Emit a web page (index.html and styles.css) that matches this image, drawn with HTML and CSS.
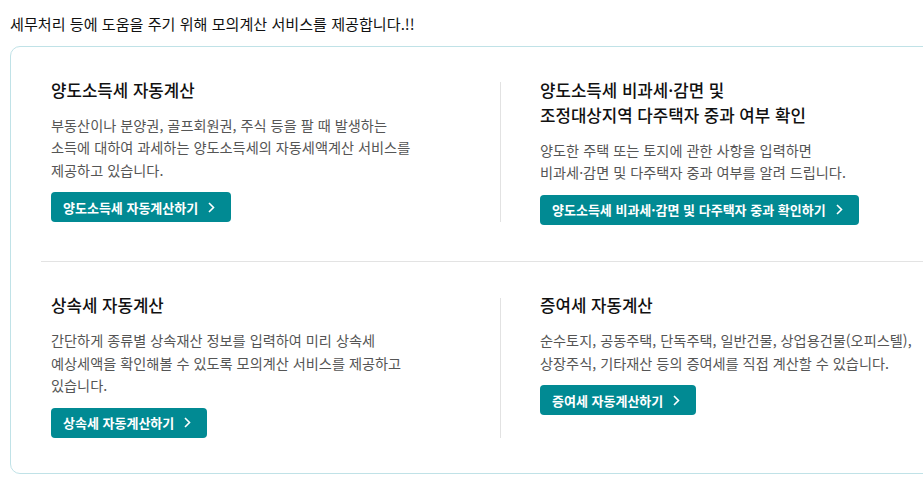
FILE: index.html
```html
<!DOCTYPE html>
<html lang="ko">
<head>
<meta charset="utf-8">
<title>모의계산 서비스</title>
<link rel="stylesheet" href="styles.css">
</head>
<body>
<p class="intro">세무처리 등에 도움을 주기 위해 모의계산 서비스를 제공합니다.!!</p>
<div class="card">
  <div class="row row-top">
    <div class="item item-left">
      <h3 class="item-title">양도소득세 자동계산</h3>
      <p class="item-desc">부동산이나 분양권, 골프회원권, 주식 등을 팔 때 발생하는<br>소득에 대하여 과세하는 양도소득세의 자동세액계산 서비스를<br>제공하고 있습니다.</p>
      <a class="btn" href="#">양도소득세 자동계산하기<svg class="chev" width="7" height="11" viewBox="0 0 7 11"><polyline points="1,1 5.5,5.5 1,10" fill="none" stroke="#fff" stroke-width="1.6"/></svg></a>
    </div>
    <div class="item item-right">
      <h3 class="item-title">양도소득세 비과세·감면 및<br>조정대상지역 다주택자 중과 여부 확인</h3>
      <p class="item-desc">양도한 주택 또는 토지에 관한 사항을 입력하면<br>비과세·감면 및 다주택자 중과 여부를 알려 드립니다.</p>
      <a class="btn" href="#">양도소득세 비과세·감면 및 다주택자 중과 확인하기<svg class="chev" width="7" height="11" viewBox="0 0 7 11"><polyline points="1,1 5.5,5.5 1,10" fill="none" stroke="#fff" stroke-width="1.6"/></svg></a>
    </div>
  </div>
  <div class="row row-bottom">
    <div class="item item-left">
      <h3 class="item-title">상속세 자동계산</h3>
      <p class="item-desc">간단하게 종류별 상속재산 정보를 입력하여 미리 상속세<br>예상세액을 확인해볼 수 있도록 모의계산 서비스를 제공하고<br>있습니다.</p>
      <a class="btn" href="#">상속세 자동계산하기<svg class="chev" width="7" height="11" viewBox="0 0 7 11"><polyline points="1,1 5.5,5.5 1,10" fill="none" stroke="#fff" stroke-width="1.6"/></svg></a>
    </div>
    <div class="item item-right">
      <h3 class="item-title">증여세 자동계산</h3>
      <p class="item-desc">순수토지, 공동주택, 단독주택, 일반건물, 상업용건물(오피스텔),<br>상장주식, 기타재산 등의 증여세를 직접 계산할 수 있습니다.</p>
      <a class="btn" href="#">증여세 자동계산하기<svg class="chev" width="7" height="11" viewBox="0 0 7 11"><polyline points="1,1 5.5,5.5 1,10" fill="none" stroke="#fff" stroke-width="1.6"/></svg></a>
    </div>
  </div>
</div>
</body>
</html>
```
FILE: styles.css
```css
html, body {
  margin: 0;
  overflow: hidden;
  background: #fff;
}
body {
  padding: 12px 0 0 10px;
  font-family: "Noto Sans CJK KR", "Noto Sans", sans-serif;
  color: #222;
}
.intro {
  margin: 0;
  font-size: 15.1px;
  line-height: 22px;
  color: #111;
  white-space: nowrap;
}
.card {
  margin-top: 12px;
  width: 960px;
  box-sizing: border-box;
  border: 1px solid #c0e2e7;
  border-radius: 10px;
  padding: 35px 0 35px 30px;
}
.row {
  display: grid;
  grid-template-columns: 460px 1fr;
  align-items: start;
}
.row-top {
  padding-bottom: 36px;
  border-bottom: 1px solid #e3e3e3;
}
.row-bottom {
  padding-top: 36px;
}
.item {
  white-space: nowrap;
}
.item-left {
  padding-left: 10px;
  border-right: 1px solid #e2e2e2;
}
.item-right {
  padding-left: 39px;
}
.item-title {
  margin: -4.5px 0 11px;
  font-size: 16.8px;
  line-height: 25px;
  font-weight: 500;
  color: #111;
}
.item-desc {
  margin: 0 0 11px;
  font-size: 14.2px;
  line-height: 22.5px;
  color: #555;
}
.btn {
  display: inline-flex;
  align-items: center;
  gap: 10px;
  height: 30px;
  padding: 0 16px 0 12px;
  background: #018a93;
  border-radius: 4px;
  color: #fff;
  font-size: 13px;
  font-weight: 700;
  text-decoration: none;
  vertical-align: top;
}
.chev {
  display: block;
}
```
